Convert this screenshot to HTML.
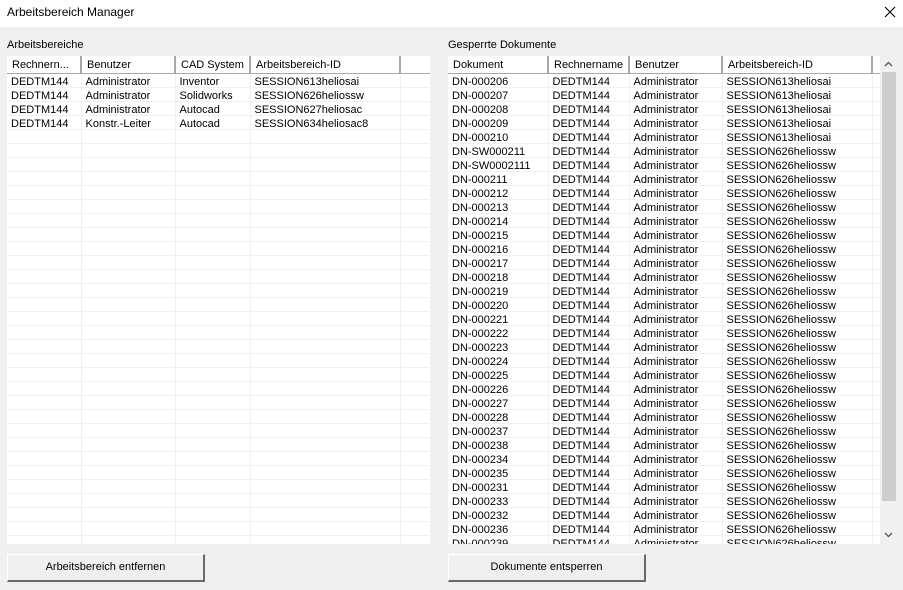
<!DOCTYPE html>
<html><head><meta charset="utf-8"><style>
*{margin:0;padding:0;box-sizing:border-box}
body{width:903px;height:590px;background:#f0f0f0;font-family:"Liberation Sans",Arial,sans-serif;font-size:11px;color:#000;position:relative;overflow:hidden}
.title{position:absolute;left:0;top:0;width:903px;height:27px;background:#fff}
.title span{position:absolute;left:7px;top:5px;font-size:12px}
.x{position:absolute;left:883px;top:5px;width:14px;height:14px}
.lbl{position:absolute;top:39px;font-size:11px}
.list{position:absolute;top:56px;height:488px;background:#fff;overflow:hidden}
table{border-collapse:collapse;table-layout:fixed}
th{height:17px;font-weight:normal;text-align:left;padding-left:5px;padding-top:1px;background:#fff;border-right:2px solid #a8a8a8;border-bottom:1px solid #a8a8a8;white-space:nowrap;overflow:hidden;font-size:11px}
td{height:14px;padding-left:4px;padding-top:3px;border-right:1px solid #f0f0f0;border-bottom:1px solid #f0f0f0;white-space:nowrap;overflow:hidden;line-height:10px}
.btn{position:absolute;top:554px;height:28px;width:198px;background:#efefef;border-top:1px solid #fff;border-left:1px solid #fff;border-right:2px solid #696969;border-bottom:2px solid #696969;text-align:center;line-height:25px;font-size:11px}
.sb{position:absolute;left:880px;top:56px;width:17px;height:488px;background:#f0f0f0}
.thumb{position:absolute;left:2px;top:16px;width:14px;height:429px;background:#cdcdcd}
</style></head><body>
<div class="title"><span>Arbeitsbereich Manager</span>
<svg class="x" viewBox="0 0 14 14"><path d="M2 2L12 12M12 2L2 12" stroke="#000" stroke-width="1.1"/></svg></div>
<div class="lbl" style="left:7px">Arbeitsbereiche</div>
<div class="lbl" style="left:448px">Gesperrte Dokumente</div>

<div class="list" style="left:7px;width:423px">
<table style="width:430px">
<colgroup><col style="width:74px"><col style="width:94px"><col style="width:75px"><col style="width:150px"><col style="width:37px"></colgroup>
<tr><th>Rechnern...</th><th>Benutzer</th><th>CAD System</th><th>Arbeitsbereich-ID</th><th></th></tr>
<tr><td>DEDTM144</td><td>Administrator</td><td>Inventor</td><td>SESSION613heliosai</td><td></td></tr>
<tr><td>DEDTM144</td><td>Administrator</td><td>Solidworks</td><td>SESSION626heliossw</td><td></td></tr>
<tr><td>DEDTM144</td><td>Administrator</td><td>Autocad</td><td>SESSION627heliosac</td><td></td></tr>
<tr><td>DEDTM144</td><td>Konstr.-Leiter</td><td>Autocad</td><td>SESSION634heliosac8</td><td></td></tr>
<tr><td></td><td></td><td></td><td></td><td></td></tr><tr><td></td><td></td><td></td><td></td><td></td></tr><tr><td></td><td></td><td></td><td></td><td></td></tr><tr><td></td><td></td><td></td><td></td><td></td></tr><tr><td></td><td></td><td></td><td></td><td></td></tr><tr><td></td><td></td><td></td><td></td><td></td></tr>
<tr><td></td><td></td><td></td><td></td><td></td></tr><tr><td></td><td></td><td></td><td></td><td></td></tr><tr><td></td><td></td><td></td><td></td><td></td></tr><tr><td></td><td></td><td></td><td></td><td></td></tr><tr><td></td><td></td><td></td><td></td><td></td></tr><tr><td></td><td></td><td></td><td></td><td></td></tr>
<tr><td></td><td></td><td></td><td></td><td></td></tr><tr><td></td><td></td><td></td><td></td><td></td></tr><tr><td></td><td></td><td></td><td></td><td></td></tr><tr><td></td><td></td><td></td><td></td><td></td></tr><tr><td></td><td></td><td></td><td></td><td></td></tr><tr><td></td><td></td><td></td><td></td><td></td></tr>
<tr><td></td><td></td><td></td><td></td><td></td></tr><tr><td></td><td></td><td></td><td></td><td></td></tr><tr><td></td><td></td><td></td><td></td><td></td></tr><tr><td></td><td></td><td></td><td></td><td></td></tr><tr><td></td><td></td><td></td><td></td><td></td></tr><tr><td></td><td></td><td></td><td></td><td></td></tr>
<tr><td></td><td></td><td></td><td></td><td></td></tr><tr><td></td><td></td><td></td><td></td><td></td></tr><tr><td></td><td></td><td></td><td></td><td></td></tr><tr><td></td><td></td><td></td><td></td><td></td></tr><tr><td></td><td></td><td></td><td></td><td></td></tr><tr><td></td><td></td><td></td><td></td><td></td></tr>
</table></div>

<div class="list" style="left:448px;width:432px">
<table style="width:440px">
<colgroup><col style="width:100px"><col style="width:81px"><col style="width:93px"><col style="width:150px"><col style="width:16px"></colgroup>
<tr><th>Dokument</th><th>Rechnername</th><th>Benutzer</th><th>Arbeitsbereich-ID</th><th></th></tr>
<tr><td>DN-000206</td><td>DEDTM144</td><td>Administrator</td><td>SESSION613heliosai</td><td></td></tr>
<tr><td>DN-000207</td><td>DEDTM144</td><td>Administrator</td><td>SESSION613heliosai</td><td></td></tr>
<tr><td>DN-000208</td><td>DEDTM144</td><td>Administrator</td><td>SESSION613heliosai</td><td></td></tr>
<tr><td>DN-000209</td><td>DEDTM144</td><td>Administrator</td><td>SESSION613heliosai</td><td></td></tr>
<tr><td>DN-000210</td><td>DEDTM144</td><td>Administrator</td><td>SESSION613heliosai</td><td></td></tr>
<tr><td>DN-SW000211</td><td>DEDTM144</td><td>Administrator</td><td>SESSION626heliossw</td><td></td></tr>
<tr><td>DN-SW0002111</td><td>DEDTM144</td><td>Administrator</td><td>SESSION626heliossw</td><td></td></tr>
<tr><td>DN-000211</td><td>DEDTM144</td><td>Administrator</td><td>SESSION626heliossw</td><td></td></tr>
<tr><td>DN-000212</td><td>DEDTM144</td><td>Administrator</td><td>SESSION626heliossw</td><td></td></tr>
<tr><td>DN-000213</td><td>DEDTM144</td><td>Administrator</td><td>SESSION626heliossw</td><td></td></tr>
<tr><td>DN-000214</td><td>DEDTM144</td><td>Administrator</td><td>SESSION626heliossw</td><td></td></tr>
<tr><td>DN-000215</td><td>DEDTM144</td><td>Administrator</td><td>SESSION626heliossw</td><td></td></tr>
<tr><td>DN-000216</td><td>DEDTM144</td><td>Administrator</td><td>SESSION626heliossw</td><td></td></tr>
<tr><td>DN-000217</td><td>DEDTM144</td><td>Administrator</td><td>SESSION626heliossw</td><td></td></tr>
<tr><td>DN-000218</td><td>DEDTM144</td><td>Administrator</td><td>SESSION626heliossw</td><td></td></tr>
<tr><td>DN-000219</td><td>DEDTM144</td><td>Administrator</td><td>SESSION626heliossw</td><td></td></tr>
<tr><td>DN-000220</td><td>DEDTM144</td><td>Administrator</td><td>SESSION626heliossw</td><td></td></tr>
<tr><td>DN-000221</td><td>DEDTM144</td><td>Administrator</td><td>SESSION626heliossw</td><td></td></tr>
<tr><td>DN-000222</td><td>DEDTM144</td><td>Administrator</td><td>SESSION626heliossw</td><td></td></tr>
<tr><td>DN-000223</td><td>DEDTM144</td><td>Administrator</td><td>SESSION626heliossw</td><td></td></tr>
<tr><td>DN-000224</td><td>DEDTM144</td><td>Administrator</td><td>SESSION626heliossw</td><td></td></tr>
<tr><td>DN-000225</td><td>DEDTM144</td><td>Administrator</td><td>SESSION626heliossw</td><td></td></tr>
<tr><td>DN-000226</td><td>DEDTM144</td><td>Administrator</td><td>SESSION626heliossw</td><td></td></tr>
<tr><td>DN-000227</td><td>DEDTM144</td><td>Administrator</td><td>SESSION626heliossw</td><td></td></tr>
<tr><td>DN-000228</td><td>DEDTM144</td><td>Administrator</td><td>SESSION626heliossw</td><td></td></tr>
<tr><td>DN-000237</td><td>DEDTM144</td><td>Administrator</td><td>SESSION626heliossw</td><td></td></tr>
<tr><td>DN-000238</td><td>DEDTM144</td><td>Administrator</td><td>SESSION626heliossw</td><td></td></tr>
<tr><td>DN-000234</td><td>DEDTM144</td><td>Administrator</td><td>SESSION626heliossw</td><td></td></tr>
<tr><td>DN-000235</td><td>DEDTM144</td><td>Administrator</td><td>SESSION626heliossw</td><td></td></tr>
<tr><td>DN-000231</td><td>DEDTM144</td><td>Administrator</td><td>SESSION626heliossw</td><td></td></tr>
<tr><td>DN-000233</td><td>DEDTM144</td><td>Administrator</td><td>SESSION626heliossw</td><td></td></tr>
<tr><td>DN-000232</td><td>DEDTM144</td><td>Administrator</td><td>SESSION626heliossw</td><td></td></tr>
<tr><td>DN-000236</td><td>DEDTM144</td><td>Administrator</td><td>SESSION626heliossw</td><td></td></tr>
<tr><td>DN-000239</td><td>DEDTM144</td><td>Administrator</td><td>SESSION626heliossw</td><td></td></tr>
</table></div>
<div class="sb"><div class="thumb"></div>
<svg style="position:absolute;left:4px;top:5px" width="9" height="6" viewBox="0 0 9 6"><path d="M1 5L4.5 1.5L8 5" stroke="#606060" stroke-width="1.5" fill="none"/></svg>
<svg style="position:absolute;left:4px;top:476px" width="9" height="6" viewBox="0 0 9 6"><path d="M1 1L4.5 4.5L8 1" stroke="#606060" stroke-width="1.5" fill="none"/></svg>
</div>
<div class="btn" style="left:7px">Arbeitsbereich entfernen</div>
<div class="btn" style="left:448px">Dokumente entsperren</div>
</body></html>
